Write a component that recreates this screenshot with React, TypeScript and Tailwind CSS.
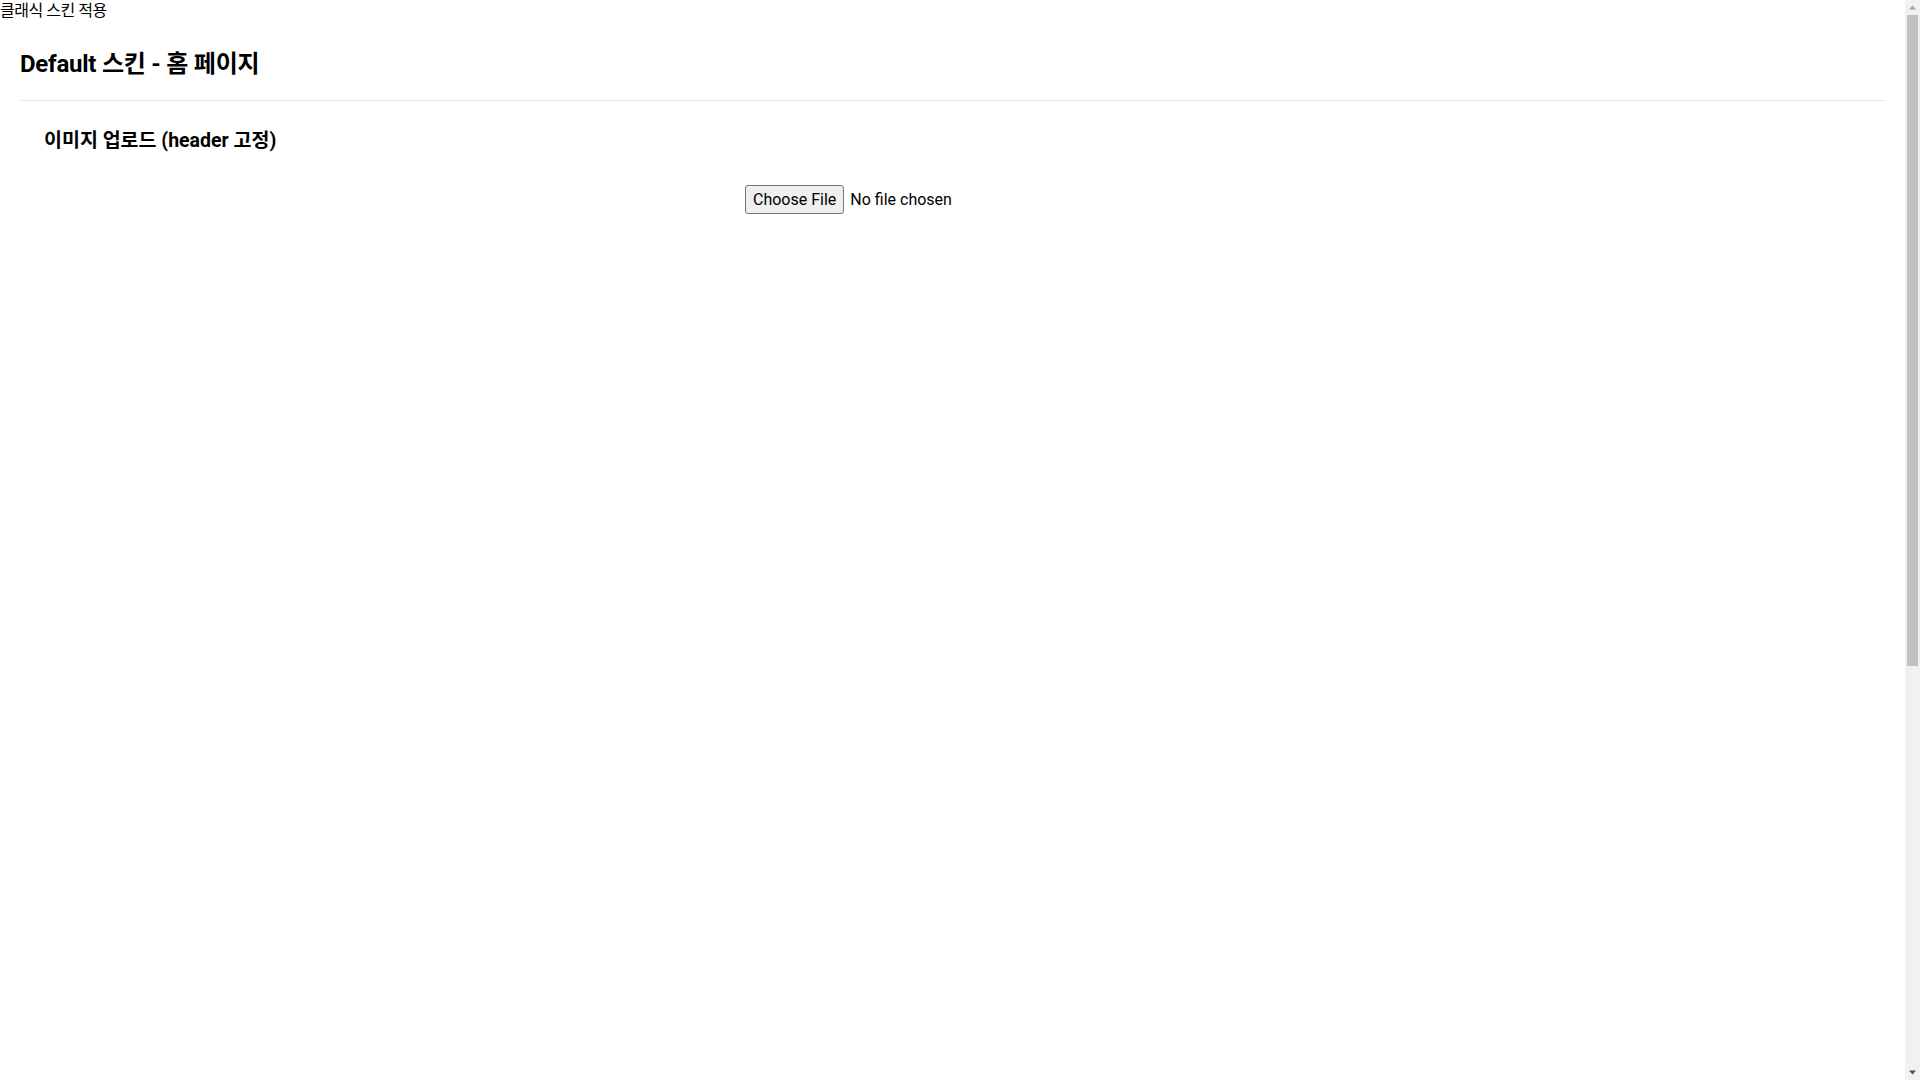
function Scrollbar() {
  return (
    <div className="flex h-screen w-[15px] shrink-0 flex-col items-center bg-[#f1f1f1]">
      <svg width="15" height="15" viewBox="0 0 15 15" className="shrink-0">
        <path d="M4 9.5 L7.5 5.5 L11 9.5 Z" fill="#a3a3a3" />
      </svg>
      <div className="h-[651px] w-[11px] shrink-0 bg-[#c1c1c1]" />
      <div className="flex-1" />
      <svg width="15" height="15" viewBox="0 0 15 15" className="shrink-0">
        <path d="M4 5.5 L11 5.5 L7.5 9.5 Z" fill="#505050" />
      </svg>
    </div>
  );
}

export default function App() {
  return (
    <div
      className="flex h-screen overflow-hidden bg-white text-black"
      style={{ fontFamily: 'Roboto, "Noto Sans CJK KR", sans-serif' }}
    >
      <div className="min-w-0 flex-1">
        <div className="pt-[1px] text-base leading-[20px] tracking-[-0.03em]">클래식 스킨 적용</div>

        <main className="px-5">
          <header className="border-b border-[#e5e7eb] pb-[20px] pt-[27px]">
            <h2 className="text-2xl font-bold leading-8 tracking-[-0.01em]">Default 스킨 - 홈 페이지</h2>
          </header>

          <section className="px-6 pt-[26px]">
            <h3 className="text-[19.5px] font-bold leading-7">이미지 업로드 (header 고정)</h3>

            <div className="flex justify-center pt-[30px]">
              <input
                type="file"
                className="w-[415px] text-base leading-[19px] file:mr-[6px] file:rounded-[3px] file:border file:border-solid file:border-[#767676] file:bg-[#efefef] file:px-[7px] file:py-[4px] file:text-black"
              />
            </div>
          </section>
        </main>
      </div>
      <Scrollbar />
    </div>
  );
}
